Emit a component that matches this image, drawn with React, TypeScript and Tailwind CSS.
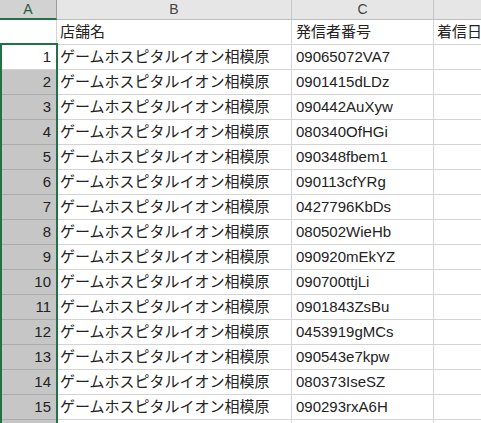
import React from "react";

const ids = [
  "09065072VA7",
  "0901415dLDz",
  "090442AuXyw",
  "080340OfHGi",
  "090348fbem1",
  "090113cfYRg",
  "0427796KbDs",
  "080502WieHb",
  "090920mEkYZ",
  "090700ttjLi",
  "0901843ZsBu",
  "0453919gMCs",
  "090543e7kpw",
  "080373IseSZ",
  "090293rxA6H",
];

const font = { fontFamily: '"Liberation Sans", "Noto Sans CJK JP", sans-serif' };

export default function App() {
  return (
    <div className="relative w-[481px] h-[423px] overflow-hidden bg-white text-[#222]" style={font}>
      {/* column header */}
      <div className="flex h-[20px] text-[14px] text-[#444]">
        <div className="w-[57px] shrink-0 bg-[#d2d2d2] border-r border-[#9c9c9c] border-b-2 border-b-[#217346] flex items-center justify-center text-[#1d5e3b]">
          A
        </div>
        <div className="w-[235px] shrink-0 bg-[#e6e6e6] border-r border-[#c6c6c6] border-b border-b-[#bdbdbd] flex items-center justify-center">
          B
        </div>
        <div className="w-[142px] shrink-0 bg-[#e6e6e6] border-r border-[#c6c6c6] border-b border-b-[#bdbdbd] flex items-center justify-center">
          C
        </div>
        <div className="flex-1 bg-[#e6e6e6] border-b border-b-[#bdbdbd]" />
      </div>

      {/* title row */}
      <div className="flex h-[25px] text-[15px]">
        <div className="w-[57px] shrink-0 border-r border-b border-[#d4d4d4]" />
        <div className="w-[235px] shrink-0 border-r border-b border-[#d4d4d4] flex items-center pl-[3px] pt-[1px]">
          店舗名
        </div>
        <div className="w-[142px] shrink-0 border-r border-b border-[#d4d4d4] flex items-center pl-[4px] pt-[1px]">
          発信者番号
        </div>
        <div className="flex-1 border-b border-[#d4d4d4] flex items-center pl-[3px] pt-[1px] whitespace-nowrap overflow-hidden">
          着信日
        </div>
      </div>

      {ids.map((id, i) => (
        <div key={id} className="flex h-[25px] text-[15px]">
          <div
            className={
              i === 0
                ? "w-[57px] shrink-0 bg-white border-r border-b border-[#d4d4d4] flex items-center justify-end pr-[5px] pt-[1px]"
                : "w-[57px] shrink-0 bg-[#c6c6c6] border-r border-b border-[#ababab] flex items-center justify-end pr-[5px] pt-[1px]"
            }
          >
            {i + 1}
          </div>
          <div className="w-[235px] shrink-0 border-r border-b border-[#d4d4d4] flex items-center pl-[3px] pt-[1px] whitespace-nowrap">
            ゲームホスピタルイオン相模原
          </div>
          <div className="w-[142px] shrink-0 border-r border-b border-[#d4d4d4] flex items-center pl-[4px] pt-[1px]">
            {id}
          </div>
          <div className="flex-1 border-b border-[#d4d4d4]" />
        </div>
      ))}
      <div className="flex h-[25px]">
        <div className="w-[57px] shrink-0 bg-[#c6c6c6] border-r border-[#ababab]" />
        <div className="w-[235px] shrink-0 border-r border-[#d4d4d4]" />
        <div className="w-[142px] shrink-0 border-r border-[#d4d4d4]" />
      </div>

      {/* selection border overlay */}
      <div className="absolute left-0 top-[43px] w-[58px] h-[400px] border-2 border-[#217346] pointer-events-none" />
    </div>
  );
}
